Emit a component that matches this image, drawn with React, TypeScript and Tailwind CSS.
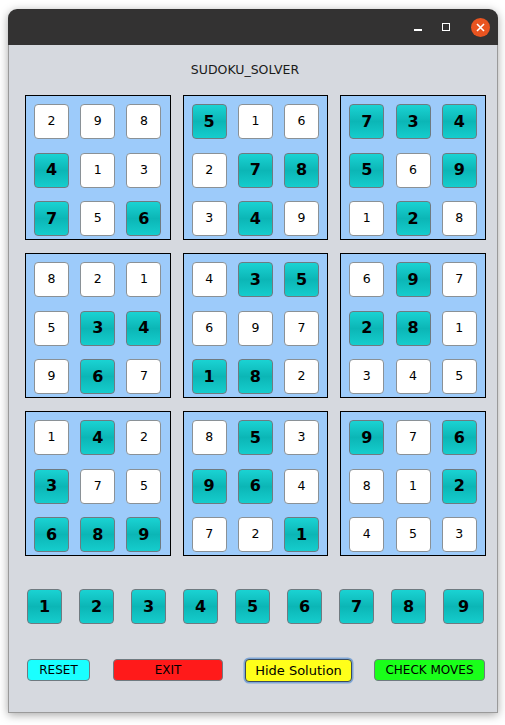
import React from "react";

// "*" marks a given (teal) cell
const blocks = [
  "2 9 8 4* 1 3 7* 5 6*",
  "5* 1 6 2 7* 8* 3 4* 9",
  "7* 3* 4* 5* 6 9* 1 2* 8",
  "8 2 1 5 3* 4* 9 6* 7",
  "4 3* 5* 6 9 7 1* 8* 2",
  "6 9* 7 2* 8* 1 3 4 5",
  "1 4* 2 3* 7 5 6* 8* 9*",
  "8 5* 3 9* 6* 4 7 2 1*",
  "9* 7 6* 8 1 2* 4 5 3",
];

const font = { fontFamily: '"DejaVu Sans", Verdana, sans-serif' };

function Cell({ v }: { v: string }) {
  const fixed = v.endsWith("*");
  const n = v.replace("*", "");
  if (fixed) {
    return (
      <div className="flex h-[35px] w-[35px] items-center justify-center rounded-[4px] border border-[#6f7a80] bg-gradient-to-b from-[#1ad3d3] via-[#0bb6b6] to-[#15cdcd] text-[16px] font-bold text-black">
        {n}
      </div>
    );
  }
  return (
    <div className="flex h-[35px] w-[35px] items-center justify-center rounded-[4px] border border-[#8a9196] bg-white text-[12.5px] text-black">
      {n}
    </div>
  );
}

function Block({ data }: { data: string }) {
  return (
    <div className="grid h-[145px] grid-cols-3 gap-[11px] border border-black bg-[#9dcbfa] px-[8px] pt-[8px]">
      {data.split(" ").map((v, i) => (
        <Cell key={i} v={v} />
      ))}
    </div>
  );
}

export default function App() {
  return (
    <div className="min-h-[725px] bg-white pl-[8px] pt-[9px]" style={font}>
      <div className="w-[490px] overflow-hidden rounded-t-[9px] shadow-[0_2px_10px_rgba(0,0,0,0.35)]">
        {/* title bar */}
        <div className="flex h-[36px] items-center justify-end bg-[#333232] pr-[8px]">
          <div className="mr-[20px] mt-[6px] h-[1.5px] w-[8px] bg-white" />
          <div className="mr-[21px] h-[8px] w-[8px] border-[1.5px] border-white" />
          <div className="flex h-[19px] w-[19px] items-center justify-center rounded-full bg-[#e95420]">
            <svg width="9" height="9" viewBox="0 0 9 9">
              <path d="M1 1L8 8M8 1L1 8" stroke="white" strokeWidth="1.6" />
            </svg>
          </div>
        </div>

        <div className="h-[668px] border-x border-b border-[#9a9a9a] bg-[#d6d9df] pt-[18px]">
          <div className="h-[14px] pr-[16px] text-center text-[12.5px] leading-[14px] text-[#1a1a1a]">
            SUDOKU_SOLVER
          </div>

          <div className="ml-[16px] mt-[18px] grid w-[461px] grid-cols-3 gap-x-[12px] gap-y-[13px]">
            {blocks.map((b, i) => (
              <Block key={i} data={b} />
            ))}
          </div>

          <div className="ml-[18px] mt-[33px] flex gap-[17px]">
            {[1, 2, 3, 4, 5, 6, 7, 8, 9].map((n) => (
              <button
                key={n}
                className={`flex h-[35px] ${n === 9 ? "w-[41px]" : "w-[35px]"} items-center justify-center rounded-[4px] border border-[#6f7a80] bg-gradient-to-b from-[#1ad3d3] via-[#0bb6b6] to-[#15cdcd] text-[16px] font-bold text-black`}
              >
                {n}
              </button>
            ))}
          </div>

          <div className="ml-[18px] mt-[35px] flex text-[12px] text-black">
            <button className="h-[22px] w-[63px] rounded-[4px] border border-[#6f7a80] bg-[#1affff]">
              RESET
            </button>
            <button className="ml-[23px] h-[22px] w-[110px] rounded-[4px] border border-[#6f7a80] bg-[#ff1a1a]">
              EXIT
            </button>
            <button className="ml-[22px] h-[23px] w-[107px] rounded-[4px] border border-[#3d4a5a] bg-[#ffff1a] text-[13px] shadow-[0_0_0_1.5px_#7fa6d6]">
              Hide Solution
            </button>
            <button className="ml-[22px] h-[22px] w-[111px] rounded-[4px] border border-[#6f7a80] bg-[#1aff1a]">
              CHECK MOVES
            </button>
          </div>
        </div>
      </div>
    </div>
  );
}
